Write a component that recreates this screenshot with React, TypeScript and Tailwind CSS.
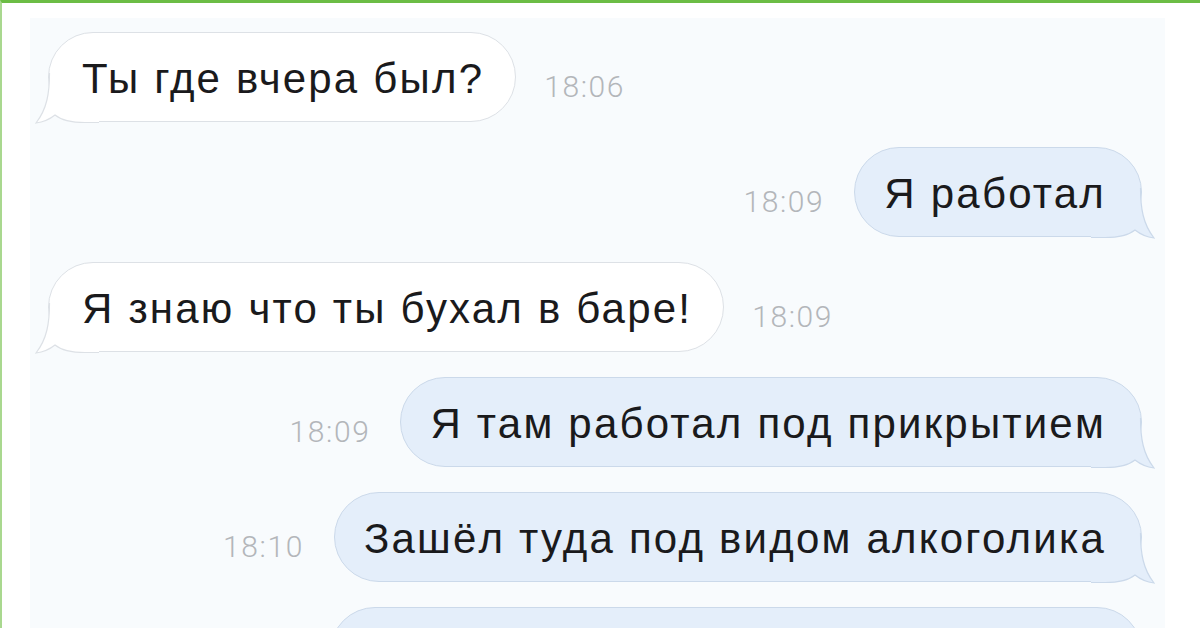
import type { ReactNode } from "react";

type Side = "in" | "out";

type Message = {
  side: Side;
  text: string;
  time?: string;
};

const messages: Message[] = [
  { side: "in", text: "Ты где вчера был?", time: "18:06" },
  { side: "out", text: "Я работал", time: "18:09" },
  { side: "in", text: "Я знаю что ты бухал в баре!", time: "18:09" },
  { side: "out", text: "Я там работал под прикрытием", time: "18:09" },
  { side: "out", text: "Зашёл туда под видом алкоголика", time: "18:10" },
];

function Tail({ side }: { side: Side }) {
  const fill = side === "in" ? "#ffffff" : "#e4eefa";
  const stroke = side === "in" ? "#dde1e6" : "#cbd9ea";
  const outline =
    "M14.5 10 C14.5 30 12 46 1 60 C9 59 15 56 20 52 C26 57 34 59.5 50 59.5 L64 59.5";
  return (
    <svg
      width="64"
      height="62"
      viewBox="0 0 64 62"
      className={
        side === "in"
          ? "absolute left-[-14px] top-[30px]"
          : "absolute right-[-14px] top-[30px] -scale-x-100"
      }
    >
      <path d={`${outline} L64 10 Z`} fill={fill} />
      <path d={outline} fill="none" stroke={stroke} strokeWidth="1.2" />
    </svg>
  );
}

function Bubble({ side, children, className = "" }: { side: Side; children?: ReactNode; className?: string }) {
  return (
    <div
      className={
        "relative flex h-[90px] items-center rounded-[45px] border " +
        (side === "in"
          ? "border-[#dde1e6] bg-white pl-[33px] pr-[31px] "
          : "border-[#cbd9ea] bg-[#e4eefa] pl-[29px] pr-[35px] ") +
        className
      }
    >
      <Tail side={side} />
      <span className="relative mt-[2px] whitespace-nowrap text-[42px] tracking-[2.2px] text-[#1a1a1c] [font-family:'Liberation_Sans',Arial,sans-serif]">
        {children}
      </span>
    </div>
  );
}

function Time({ value }: { value: string }) {
  return (
    <span className="mt-[18px] text-[30px] font-light tracking-[1.6px] text-[#b3b6ba] [font-family:Roboto,'Liberation_Sans',sans-serif]">
      {value}
    </span>
  );
}

export default function App() {
  return (
    <div className="h-[628px] w-[1200px] overflow-hidden border-l-2 border-t-[3px] border-l-[#a9d88f] border-t-[#6cbd45] bg-white">
      <div className="ml-[28px] mt-[15px] h-full w-[1135px] bg-[#f8fbfd] pt-[14px]">
        <div className="flex flex-col gap-[25px]">
          {messages.map((m, i) =>
            m.side === "in" ? (
              <div key={i} className="flex items-center gap-[28px] pl-[18px]">
                <Bubble side="in">{m.text}</Bubble>
                {m.time && <Time value={m.time} />}
              </div>
            ) : (
              <div key={i} className="flex items-center justify-end gap-[30px] pr-[23px]">
                {m.time && <Time value={m.time} />}
                <Bubble side="out">{m.text}</Bubble>
              </div>
            )
          )}
          <div className="flex justify-end pr-[23px]">
            <Bubble side="out" className="w-[812px]" />
          </div>
        </div>
      </div>
    </div>
  );
}
